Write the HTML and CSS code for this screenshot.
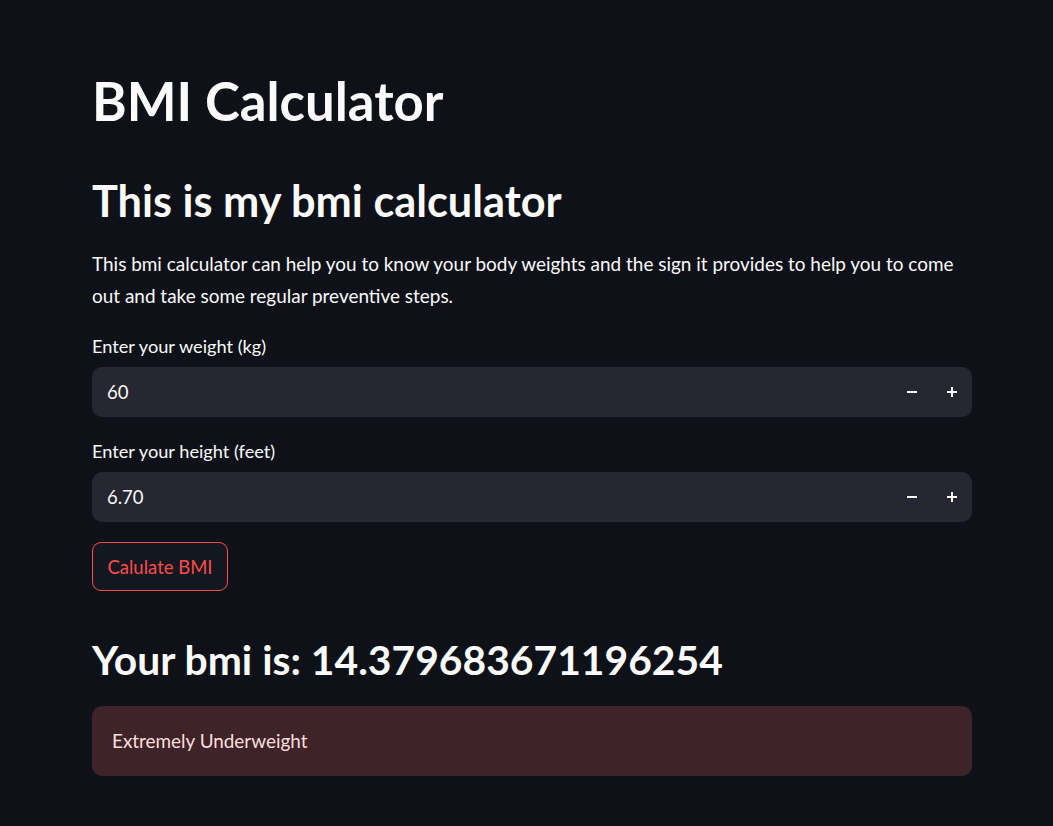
FILE: index.html
```html
<!DOCTYPE html>
<html lang="en">
<head>
<meta charset="utf-8">
<title>BMI Calculator</title>
<link rel="stylesheet" href="styles.css">
</head>
<body>
<main class="main">
  <h1 class="title">BMI Calculator</h1>
  <h2 class="subtitle">This is my bmi calculator</h2>
  <p class="intro">This bmi calculator can help you to know your body weights and the sign it provides to help you to come out and take some regular preventive steps.</p>

  <div class="field">
    <label class="label">Enter your weight (kg)</label>
    <div class="numinput">
      <span class="value">60</span>
      <div class="steps">
        <button class="step" aria-label="decrement"><svg width="10" height="10" viewBox="0 0 10 10"><rect x="0" y="4" width="10" height="2" fill="#fafafa"/></svg></button>
        <button class="step" aria-label="increment"><svg width="10" height="10" viewBox="0 0 10 10"><rect x="0" y="4" width="10" height="2" fill="#fafafa"/><rect x="4" y="0" width="2" height="10" fill="#fafafa"/></svg></button>
      </div>
    </div>
  </div>

  <div class="field">
    <label class="label">Enter your height (feet)</label>
    <div class="numinput">
      <span class="value">6.70</span>
      <div class="steps">
        <button class="step" aria-label="decrement"><svg width="10" height="10" viewBox="0 0 10 10"><rect x="0" y="4" width="10" height="2" fill="#fafafa"/></svg></button>
        <button class="step" aria-label="increment"><svg width="10" height="10" viewBox="0 0 10 10"><rect x="0" y="4" width="10" height="2" fill="#fafafa"/><rect x="4" y="0" width="2" height="10" fill="#fafafa"/></svg></button>
      </div>
    </div>
  </div>

  <div class="btnrow"><button class="calc">Calulate BMI</button></div>

  <h2 class="result">Your bmi is: 14.379683671196254</h2>

  <div class="alert">Extremely Underweight</div>
</main>
</body>
</html>
```

FILE: styles.css
```css
* { box-sizing: border-box; }
html, body {
  margin: 0;
  padding: 0;
  background: #0e1117;
  color: #fafafa;
  font-family: "Lato", "Noto Sans", sans-serif;
}
.main {
  width: 880px;
  margin-left: 92px;
  padding-top: 69px;
  display: flex;
  flex-direction: column;
}
.title {
  margin: 0;
  font-size: 52.7px;
  line-height: 64px;
  font-weight: 700;
}
.subtitle {
  margin: 41px 0 0;
  font-size: 43.3px;
  line-height: 52px;
  font-weight: 700;
}
.intro {
  margin: 22px 0 0;
  font-size: 18.95px;
  line-height: 32px;
}
.field {
  display: flex;
  flex-direction: column;
  margin-top: 22px;
}
.field + .field { margin-top: 22px; }
.label {
  font-size: 18.2px;
  line-height: 24px;
  margin-bottom: 9px;
}
.numinput {
  height: 50px;
  background: #262730;
  border-radius: 10px;
  display: flex;
  align-items: center;
  padding-left: 15px;
}
.value {
  flex: 1;
  font-size: 18.5px;
}
.steps { display: flex; height: 100%; }
.step {
  width: 40px;
  height: 100%;
  border: 0;
  background: transparent;
  padding: 0;
  display: flex;
  align-items: center;
  justify-content: center;
}
.btnrow { margin-top: 20px; display: flex; }
.calc {
  height: 49px;
  width: 136px;
  border: 1px solid #ff4b4b;
  border-radius: 9px;
  background: #131720;
  color: #ff4b4b;
  font-family: inherit;
  font-size: 18.5px;
  padding: 0;
}
.result {
  margin: 43px 0 0;
  font-size: 40.8px;
  line-height: 52px;
  font-weight: 700;
}
.alert {
  margin-top: 20px;
  height: 70px;
  background: #3e2328;
  border-radius: 10px;
  color: #ffdede;
  font-size: 18.9px;
  line-height: 32px;
  padding: 19px 20px;
}
```
